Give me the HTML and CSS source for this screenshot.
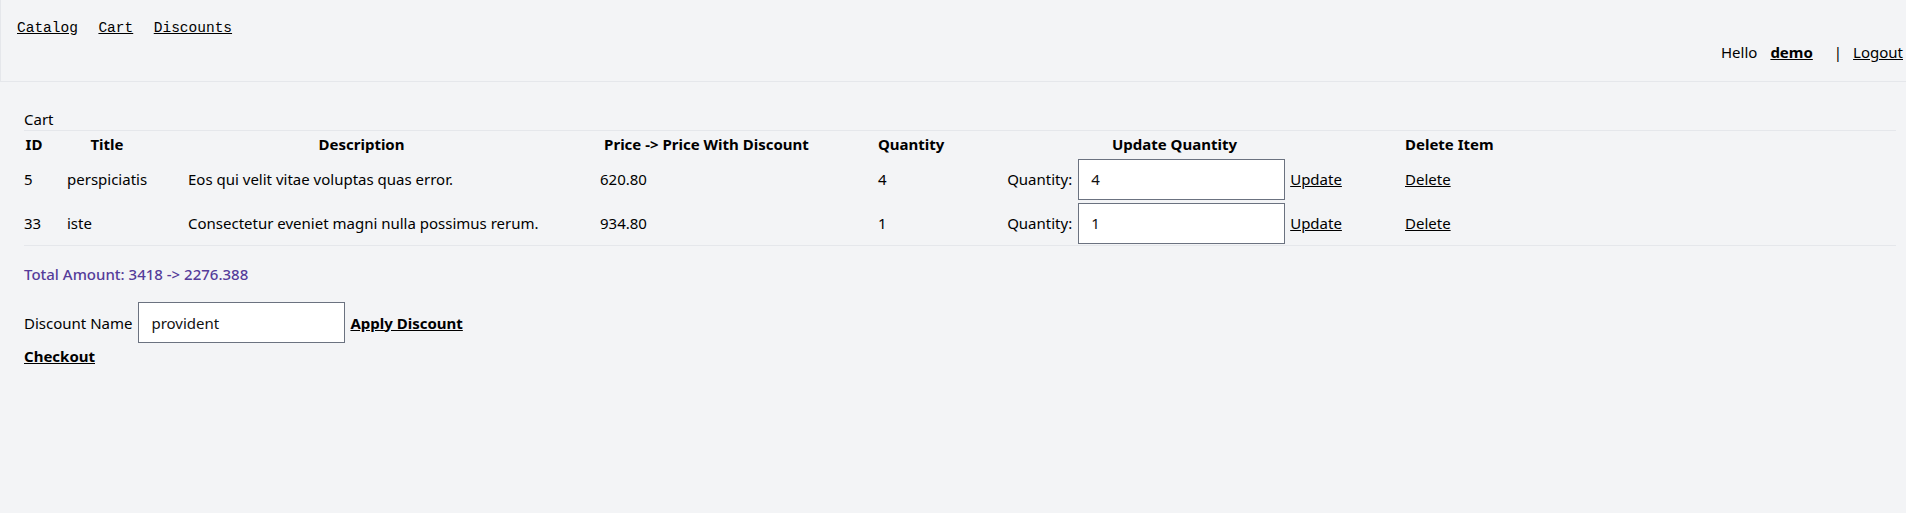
FILE: index.html
```html
<!DOCTYPE html>
<html lang="en">
<head>
<meta charset="utf-8">
<title>Cart</title>
<link rel="stylesheet" href="styles.css">
</head>
<body>
<header class="topbar">
  <nav class="nav">
    <a href="#">Catalog</a>
    <a href="#">Cart</a>
    <a href="#">Discounts</a>
  </nav>
  <div class="user">
    <span class="hello">Hello</span>
    <a href="#" class="user-name">demo</a>
    <span class="sep">|</span>
    <a href="#" class="logout">Logout</a>
  </div>
</header>
<main class="page">
  <div class="caption">Cart</div>
  <div class="cart-wrap">
    <table class="cart-table">
      <thead>
        <tr>
          <th class="c-id">ID</th>
          <th class="c-title">Title</th>
          <th class="c-desc">Description</th>
          <th class="c-price">Price -&gt; Price With Discount</th>
          <th class="c-qty">Quantity</th>
          <th class="c-upd">Update Quantity</th>
          <th class="c-del">Delete Item</th>
        </tr>
      </thead>
      <tbody>
        <tr>
          <td class="c-id">5</td>
          <td class="c-title">perspiciatis</td>
          <td class="c-desc">Eos qui velit vitae voluptas quas error.</td>
          <td class="c-price">620.80</td>
          <td class="c-qty">4</td>
          <td class="c-upd"><span class="upd-form"><label class="qty-label">Quantity:</label><input class="field" type="text" value="4"><a href="#" class="link">Update</a></span></td>
          <td class="c-del"><a href="#" class="link">Delete</a></td>
        </tr>
        <tr>
          <td class="c-id">33</td>
          <td class="c-title">iste</td>
          <td class="c-desc">Consectetur eveniet magni nulla possimus rerum.</td>
          <td class="c-price">934.80</td>
          <td class="c-qty">1</td>
          <td class="c-upd"><span class="upd-form"><label class="qty-label">Quantity:</label><input class="field" type="text" value="1"><a href="#" class="link">Update</a></span></td>
          <td class="c-del"><a href="#" class="link">Delete</a></td>
        </tr>
      </tbody>
    </table>
  </div>
  <p class="total">Total Amount: 3418 -&gt; 2276.388</p>
  <div class="discount">
    <label class="discount-label">Discount Name</label>
    <input class="field" type="text" value="provident">
    <a href="#" class="strong-link">Apply Discount</a>
  </div>
  <a href="#" class="strong-link checkout">Checkout</a>
</main>
</body>
</html>
```
FILE: styles.css
```css
html, body {
  margin: 0;
  padding: 0;
}

body {
  background: #f3f4f6;
  color: #000;
  font-family: "Noto Sans", "Open Sans", sans-serif;
  font-size: 15px;
}

a {
  color: #000;
  text-decoration: underline;
}

/* Header */
.topbar {
  height: 81px;
  border-left: 1px solid #e5e7eb;
  border-bottom: 1px solid #e5e7eb;
  padding: 0 3px 0 16px;
  display: flex;
  flex-direction: column;
}

.nav {
  margin-top: 20px;
  display: flex;
  gap: 20.5px;
  font-family: "Liberation Mono", "DejaVu Sans Mono", monospace;
  font-size: 14.5px;
  line-height: 17px;
}

.user {
  align-self: flex-end;
  margin-top: 5px;
  display: flex;
  align-items: center;
  line-height: 21px;
}

.user-name {
  font-weight: 700;
  margin-left: 13px;
}

.sep {
  margin-left: 21px;
  margin-right: 11px;
}

/* Main */
.page {
  padding: 0 10px 0 24px;
}

.caption {
  margin-top: 27px;
  line-height: 20px;
  margin-bottom: 1px;
}

.cart-wrap {
  border-top: 1px solid #e5e7eb;
  border-bottom: 1px solid #e5e7eb;
}

.cart-table {
  border-collapse: collapse;
  border-spacing: 0;
  table-layout: fixed;
  width: 1467px;
}

.cart-table th,
.cart-table td {
  padding: 0;
  white-space: nowrap;
}

.cart-table th {
  height: 26px;
  line-height: 26px;
  font-weight: 700;
  text-align: center;
}

.cart-table td {
  height: 44px;
  vertical-align: middle;
  text-align: left;
}

.c-id { width: 20px; padding-right: 23px !important; }
.c-title { width: 80px; padding-right: 41px !important; }
.c-desc { width: 347px; padding-right: 65px !important; }
.c-price { width: 213px; padding-right: 65px !important; }
.c-qty { width: 65px; padding-right: 66px !important; }
.c-upd { width: 331px; padding-right: 65px !important; }
.c-del { width: 86px; }

.upd-form {
  display: flex;
  align-items: center;
  justify-content: center;
}

.qty-label {
  margin-right: 6px;
}

.field {
  box-sizing: border-box;
  width: 207px;
  height: 41px;
  border: 1px solid #6b7280;
  background: #fff;
  padding: 0 12px;
  font-family: inherit;
  font-size: 15px;
  color: #111;
  border-radius: 0;
  margin: 0;
}

.upd-form .field {
  margin-right: 5px;
}

/* Totals & discount */
.total {
  margin: 18px 0 0;
  line-height: 20px;
  color: #553c9a;
  font-weight: 500;
}

.discount {
  margin-top: 18px;
  display: flex;
  align-items: center;
  height: 41px;
}

.discount-label {
  margin-right: 6px;
}

.discount .field {
  margin-right: 5px;
}

.strong-link {
  font-weight: 700;
}

.checkout {
  display: inline-block;
  margin-top: 3px;
  line-height: 20px;
}
```
